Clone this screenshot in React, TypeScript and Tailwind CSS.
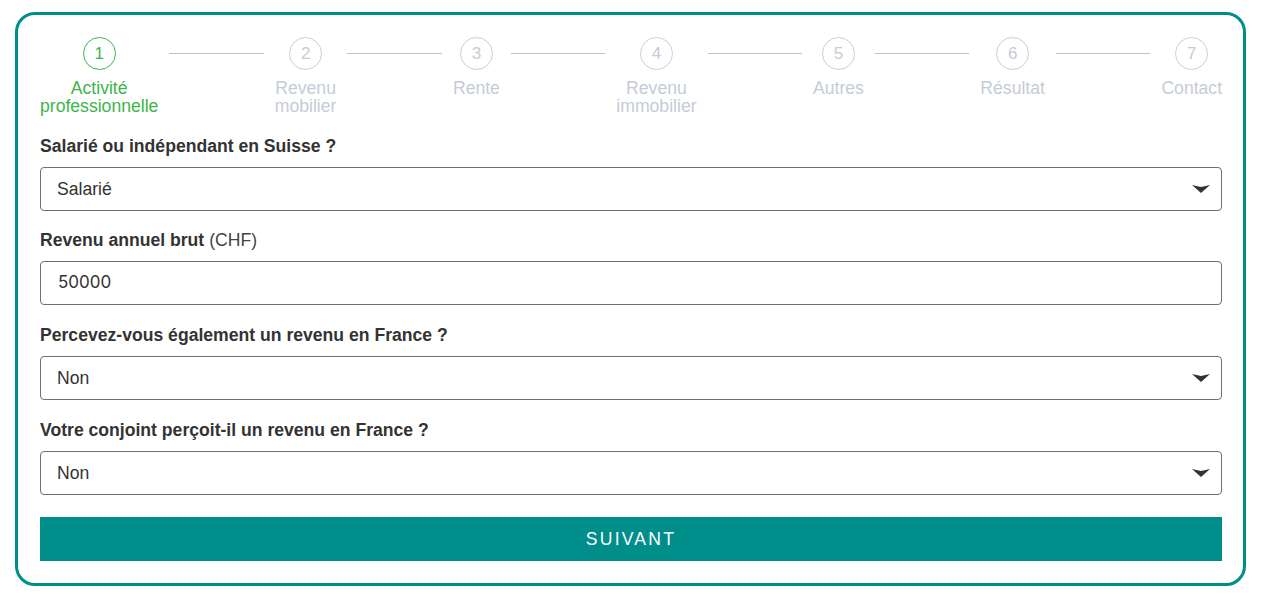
const STEPS = [
  { n: 1, label: "Activité professionnelle" },
  { n: 2, label: "Revenu mobilier" },
  { n: 3, label: "Rente" },
  { n: 4, label: "Revenu immobilier" },
  { n: 5, label: "Autres" },
  { n: 6, label: "Résultat" },
  { n: 7, label: "Contact" },
];

const ACTIVE = 1;

function Caret() {
  return (
    <svg width="18" height="8" viewBox="0 0 18 8" className="absolute right-[11px] top-1/2 -translate-y-1/2" aria-hidden>
      <path d="M0 0 L9 2 L18 0 L9 8 Z" fill="#333333" />
    </svg>
  );
}

function Stepper() {
  return (
    <div className="flex items-start">
      {STEPS.map((s, i) => {
        const active = s.n === ACTIVE;
        return (
          <div key={s.n} className="contents">
            <div className="flex flex-col items-center">
              <div
                className={
                  active
                    ? "flex h-[33px] w-[33px] items-center justify-center rounded-full border border-[#3db54a] text-[17px] text-[#3db54a]"
                    : "flex h-[33px] w-[33px] items-center justify-center rounded-full border border-[#c8cfd8] text-[17px] text-[#c5ccd6]"
                }
              >
                {s.n}
              </div>
              <span
                className={
                  active
                    ? "mt-[10px] w-min text-center text-[17.6px] leading-[17.6px] text-[#3db54a]"
                    : "mt-[10px] w-min text-center text-[17.6px] leading-[17.6px] text-[#c5ccd6]"
                }
              >
                {s.label}
              </span>
            </div>
            {i < STEPS.length - 1 && (
              <span className="mx-[11px] mt-4 h-px flex-1 bg-[#bfc4cc]" aria-hidden />
            )}
          </div>
        );
      })}
    </div>
  );
}

function SelectField({ label, value, first }: { label: string; value: string; first?: boolean }) {
  return (
    <div className={first ? "" : "mt-[18px]"}>
      <div className="mb-[9px] text-[17.6px] font-bold leading-6 text-[#333]">{label}</div>
      <div className="relative flex h-11 items-center rounded border border-[#6b7079] pl-4 text-[17.6px] text-[#333]">
        {value}
        <Caret />
      </div>
    </div>
  );
}

export default function App() {
  return (
    <div className="bg-white px-[15px] pt-[12px] pb-[10px] font-['Liberation_Sans',Arial,sans-serif]">
      <div className="rounded-[20px] border-[3px] border-[#008e8b] pt-[22px] pb-[22px] pl-[22px] pr-[21px]">
        <Stepper />
        <div className="mt-[19px]">
          <SelectField first label="Salarié ou indépendant en Suisse ?" value="Salarié" />
          <div className="mt-[17px]">
            <div className="mb-[9px] text-[17.6px] leading-6 text-[#333]">
              <span className="font-bold">Revenu annuel brut</span>{" "}
              <span className="text-[#444]">(CHF)</span>
            </div>
            <div className="flex h-11 items-center rounded border border-[#6b7079] pl-[17px] font-['Inter',sans-serif] text-[17px] text-[#333]">
              50000
            </div>
          </div>
          <SelectField label="Percevez-vous également un revenu en France ?" value="Non" />
          <SelectField label="Votre conjoint perçoit-il un revenu en France ?" value="Non" />
          <button className="mt-[22px] flex h-11 w-full items-center justify-center bg-[#008e8b] text-[17.6px] tracking-[2.2px] text-white">
            SUIVANT
          </button>
        </div>
      </div>
    </div>
  );
}
